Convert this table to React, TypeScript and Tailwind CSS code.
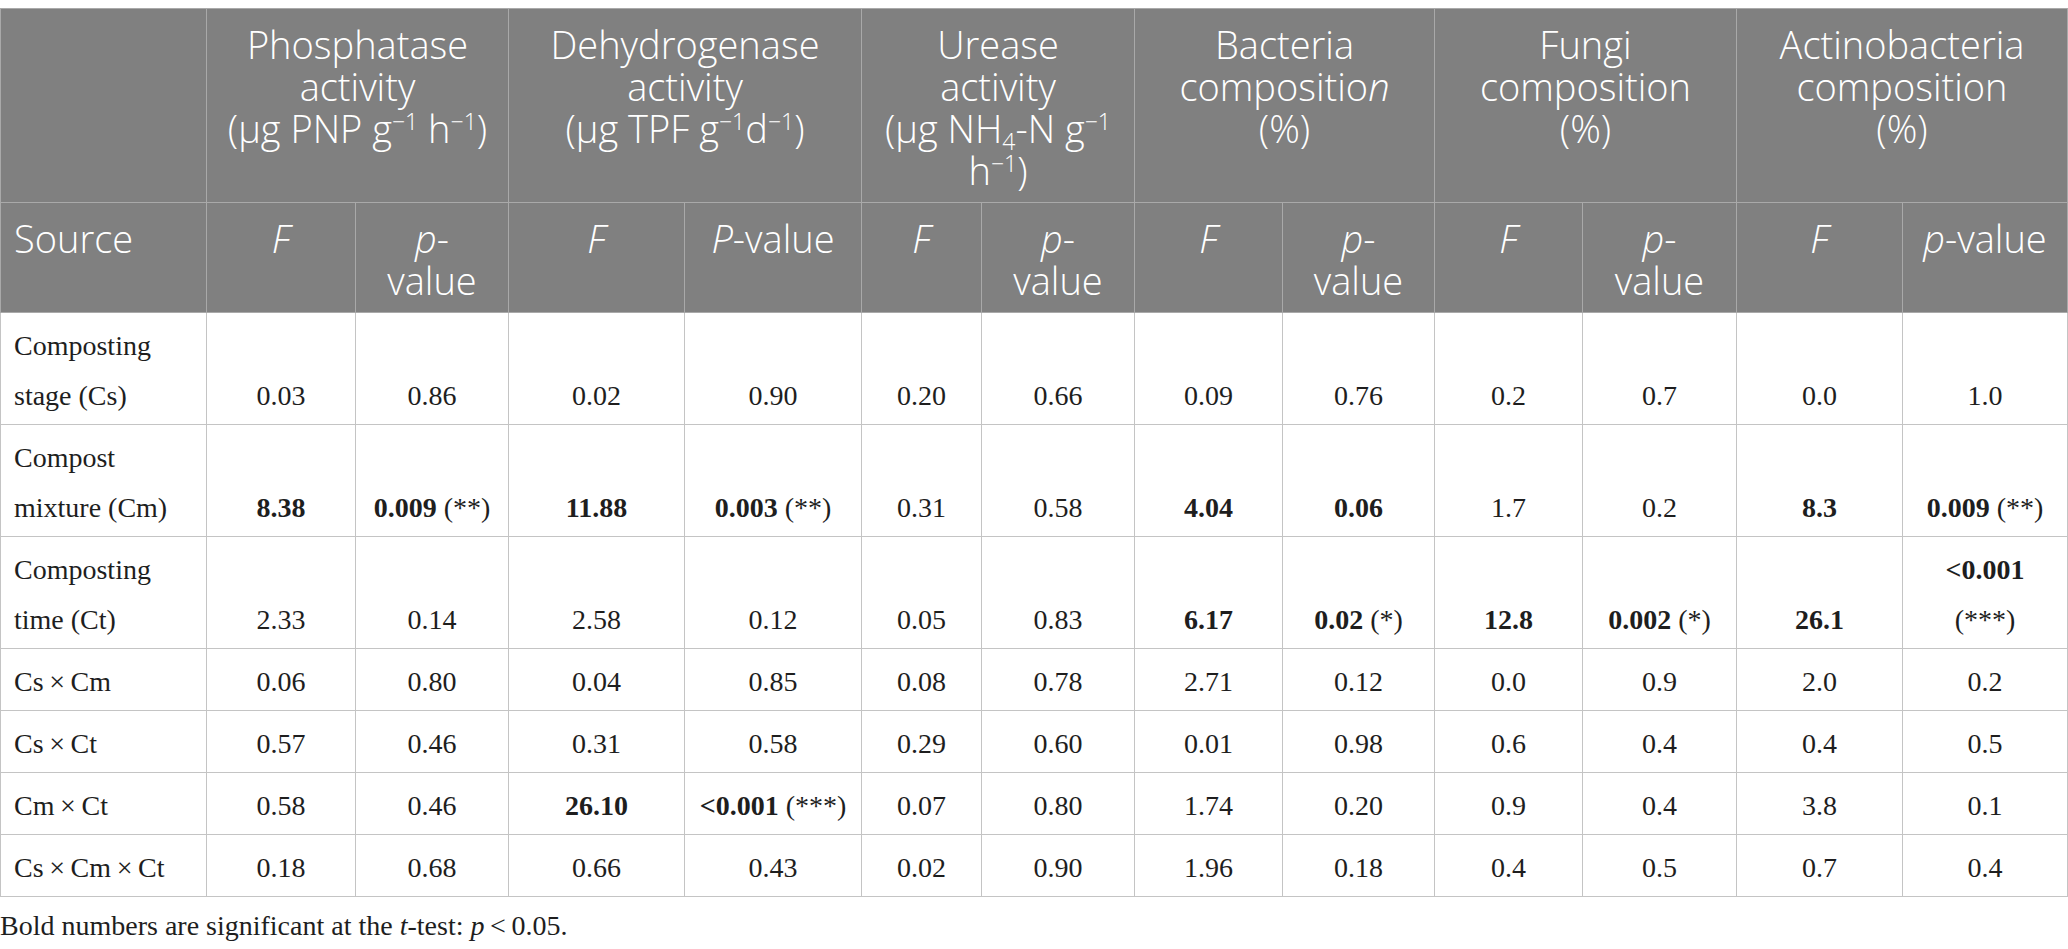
import React from "react";

const widths = [206, 149, 153, 176, 177, 120, 153, 148, 152, 148, 154, 166, 165];

type Cell = { t: React.ReactNode; b?: boolean };
type Row = { src: React.ReactNode; cells: Cell[] };

const n = (t: React.ReactNode, b = false): Cell => ({ t, b });

const X = "\u2009×\u2009";

const rows: Row[] = [
  {
    src: (
      <>
        Composting
        <br />
        stage (Cs)
      </>
    ),
    cells: [
      n("0.03"), n("0.86"), n("0.02"), n("0.90"), n("0.20"), n("0.66"),
      n("0.09"), n("0.76"), n("0.2"), n("0.7"), n("0.0"), n("1.0"),
    ],
  },
  {
    src: (
      <>
        Compost
        <br />
        mixture (Cm)
      </>
    ),
    cells: [
      n("8.38", true),
      { t: <><b>0.009</b> (**)</> },
      n("11.88", true),
      { t: <><b>0.003</b> (**)</> },
      n("0.31"), n("0.58"),
      n("4.04", true), n("0.06", true),
      n("1.7"), n("0.2"),
      n("8.3", true),
      { t: <><b>0.009</b> (**)</> },
    ],
  },
  {
    src: (
      <>
        Composting
        <br />
        time (Ct)
      </>
    ),
    cells: [
      n("2.33"), n("0.14"), n("2.58"), n("0.12"), n("0.05"), n("0.83"),
      n("6.17", true),
      { t: <><b>0.02</b> (*)</> },
      n("12.8", true),
      { t: <><b>0.002</b> (*)</> },
      n("26.1", true),
      { t: <><b>&lt;0.001</b><br />(***)</> },
    ],
  },
  {
    src: <>Cs{X}Cm</>,
    cells: [
      n("0.06"), n("0.80"), n("0.04"), n("0.85"), n("0.08"), n("0.78"),
      n("2.71"), n("0.12"), n("0.0"), n("0.9"), n("2.0"), n("0.2"),
    ],
  },
  {
    src: <>Cs{X}Ct</>,
    cells: [
      n("0.57"), n("0.46"), n("0.31"), n("0.58"), n("0.29"), n("0.60"),
      n("0.01"), n("0.98"), n("0.6"), n("0.4"), n("0.4"), n("0.5"),
    ],
  },
  {
    src: <>Cm{X}Ct</>,
    cells: [
      n("0.58"), n("0.46"),
      n("26.10", true),
      { t: <><b>&lt;0.001</b> (***)</> },
      n("0.07"), n("0.80"), n("1.74"), n("0.20"), n("0.9"), n("0.4"), n("3.8"), n("0.1"),
    ],
  },
  {
    src: <>Cs{X}Cm{X}Ct</>,
    cells: [
      n("0.18"), n("0.68"), n("0.66"), n("0.43"), n("0.02"), n("0.90"),
      n("1.96"), n("0.18"), n("0.4"), n("0.5"), n("0.7"), n("0.4"),
    ],
  },
];

const hCls =
  "border border-[#a9a9a9] bg-[#808080] text-white font-light text-[38px] leading-[42px] pt-[14px] pb-[11px] px-[8px] align-top text-center whitespace-nowrap";

const bCls =
  "border border-[#c4c4c4] text-[#1e1e1e] text-[28px] leading-[50px] pt-[8px] pb-[3px] px-[8px] align-bottom text-center whitespace-nowrap";

const Sup = ({ children }: { children: React.ReactNode }) => (
  <sup className="text-[23px] top-[-0.55em]">{children}</sup>
);

const F = () => <i>F</i>;
const P2 = () => (
  <>
    <i>p</i>-<br />value
  </>
);

export default function App() {
  return (
    <div className="w-[2068px] bg-white pt-[8px]" style={{ fontFamily: '"Liberation Serif", serif' }}>
      <table className="table-fixed border-collapse w-[2067px]">
        <colgroup>
          {widths.map((w, i) => (
            <col key={i} style={{ width: w }} />
          ))}
        </colgroup>
        <thead style={{ fontFamily: '"Open Sans", "Noto Sans", sans-serif' }}>
          <tr>
            <th className={hCls}></th>
            <th colSpan={2} className={hCls}>
              Phosphatase
              <br />
              activity
              <br />
              (μg PNP g<Sup>−1</Sup> h<Sup>−1</Sup>)
            </th>
            <th colSpan={2} className={hCls}>
              Dehydrogenase
              <br />
              activity
              <br />
              (μg TPF g<Sup>−1</Sup>d<Sup>−1</Sup>)
            </th>
            <th colSpan={2} className={hCls}>
              Urease
              <br />
              activity
              <br />
              (μg NH<sub className="text-[23px] bottom-[-0.3em]">4</sub>-N g<Sup>−1</Sup>
              <br />
              h<Sup>−1</Sup>)
            </th>
            <th colSpan={2} className={hCls}>
              Bacteria
              <br />
              compositio<i>n</i>
              <br />
              (%)
            </th>
            <th colSpan={2} className={hCls}>
              Fungi
              <br />
              composition
              <br />
              (%)
            </th>
            <th colSpan={2} className={hCls}>
              Actinobacteria
              <br />
              composition
              <br />
              (%)
            </th>
          </tr>
          <tr>
            <th className={hCls + " !text-left !px-[13px]"}>Source</th>
            <th className={hCls}><F /></th>
            <th className={hCls}><P2 /></th>
            <th className={hCls}><F /></th>
            <th className={hCls}><i>P</i>-value</th>
            <th className={hCls}><F /></th>
            <th className={hCls}><P2 /></th>
            <th className={hCls}><F /></th>
            <th className={hCls}><P2 /></th>
            <th className={hCls}><F /></th>
            <th className={hCls}><P2 /></th>
            <th className={hCls}><F /></th>
            <th className={hCls}><i>p</i>-value</th>
          </tr>
        </thead>
        <tbody>
          {rows.map((r, i) => (
            <tr key={i}>
              <td className={bCls + " !text-left !px-[13px]"}>{r.src}</td>
              {r.cells.map((c, j) => (
                <td key={j} className={bCls + (c.b ? " font-bold" : "")}>
                  {c.t}
                </td>
              ))}
            </tr>
          ))}
        </tbody>
      </table>
      <div className="text-[28px] leading-[50px] text-[#1e1e1e] mt-[4px]">
        Bold numbers are significant at the <i>t</i>-test: <i>p</i>{"\u2009"}&lt;{"\u2009"}0.05.
      </div>
    </div>
  );
}
